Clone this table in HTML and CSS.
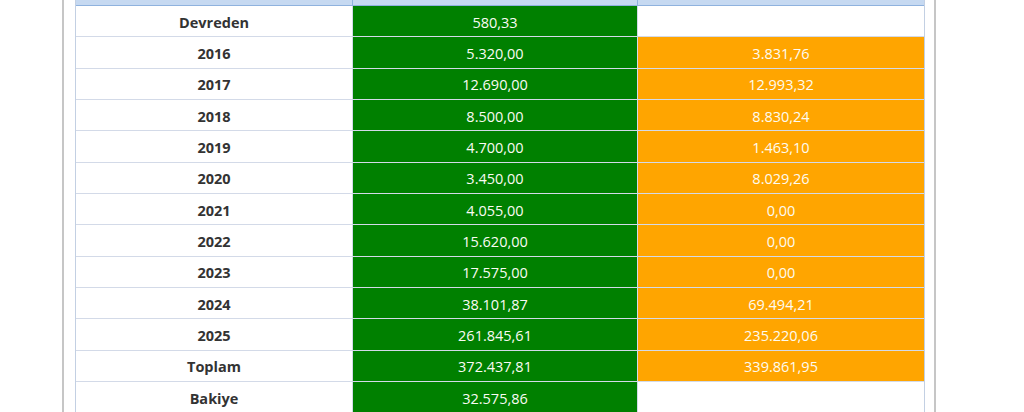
FILE: index.html
```html
<!DOCTYPE html>
<html lang="tr">
<head>
<meta charset="utf-8">
<title>Tablo</title>
<link rel="stylesheet" href="styles.css">
</head>
<body>
<div class="panel">
  <div class="grid">
    <div class="hd"></div><div class="hd"></div><div class="hd"></div>

    <div class="lbl">Devreden</div><div class="g">580,33</div><div class="w"></div>
    <div class="lbl">2016</div><div class="g">5.320,00</div><div class="o">3.831,76</div>
    <div class="lbl">2017</div><div class="g">12.690,00</div><div class="o">12.993,32</div>
    <div class="lbl">2018</div><div class="g">8.500,00</div><div class="o">8.830,24</div>
    <div class="lbl">2019</div><div class="g">4.700,00</div><div class="o">1.463,10</div>
    <div class="lbl">2020</div><div class="g">3.450,00</div><div class="o">8.029,26</div>
    <div class="lbl">2021</div><div class="g">4.055,00</div><div class="o">0,00</div>
    <div class="lbl">2022</div><div class="g">15.620,00</div><div class="o">0,00</div>
    <div class="lbl">2023</div><div class="g">17.575,00</div><div class="o">0,00</div>
    <div class="lbl">2024</div><div class="g">38.101,87</div><div class="o">69.494,21</div>
    <div class="lbl">2025</div><div class="g">261.845,61</div><div class="o">235.220,06</div>
    <div class="lbl">Toplam</div><div class="g">372.437,81</div><div class="o">339.861,95</div>
    <div class="lbl">Bakiye</div><div class="g">32.575,86</div><div class="w"></div>
  </div>
</div>
</body>
</html>
```

FILE: styles.css
```css
html, body {
  margin: 0;
  padding: 0;
  background: #ffffff;
  overflow: hidden;
}

body {
  font-family: "Open Sans", "Noto Sans", sans-serif;
  font-size: 14.5px;
}

.panel {
  margin-left: 62px;
  width: 850px;
  height: 412px;
  border-left: 2px solid #c6c6c6;
  border-right: 2px solid #c6c6c6;
  padding-left: 11px;
  padding-right: 9px;
  box-sizing: content-box;
}

.grid {
  display: grid;
  grid-template-columns: 277px 285px 286px;
  grid-template-rows: 6px;
  grid-auto-rows: 31.33px;
  width: 848px;
  border-left: 1px solid #c3d0e3;
  border-right: 1px solid #c3d0e3;
}

.grid > div {
  display: flex;
  align-items: center;
  justify-content: center;
  padding-top: 2px;
  border-bottom: 1px solid #d3dae8;
  border-right: 1px solid #d3dae8;
  box-sizing: border-box;
  white-space: nowrap;
}

.grid > div:nth-child(3n) {
  border-right: none;
}

.grid > .hd {
  padding-top: 0;
  background: #c6d9f1;
  border-bottom: 1px solid #8fb2de;
  border-right: 1px solid #8fb2de;
}

.lbl {
  background: #ffffff;
  color: #333333;
  font-weight: 700;
}

.g {
  background: #008000;
  color: #fbfbf4;
}

.o {
  background: #ffa500;
  color: #fdfbf0;
}

.w {
  background: #ffffff;
}
```
